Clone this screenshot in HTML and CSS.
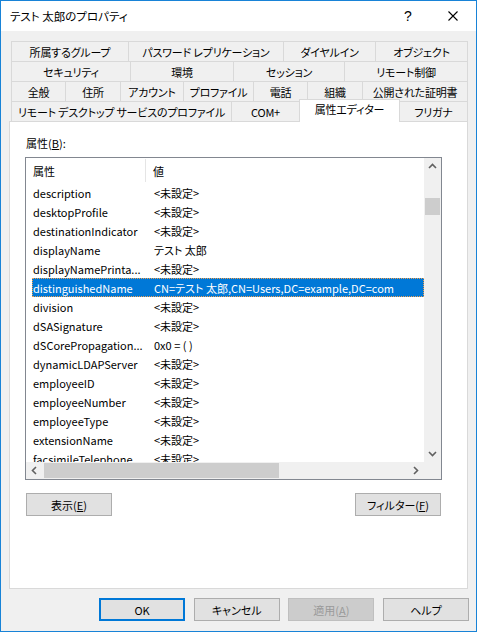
FILE: index.html
```html
<!DOCTYPE html>
<html lang="ja">
<head>
<meta charset="utf-8">
<title>テスト 太郎のプロパティ</title>
<link rel="stylesheet" href="styles.css">
</head>
<body>
<div class="window">
  <div class="titlebar">
    <span class="title">テスト 太郎のプロパティ</span>
    <span class="help">?</span>
    <svg class="close" width="10" height="10" viewBox="0 0 10 10"><path d="M0.5 0.5 L9.5 9.5 M9.5 0.5 L0.5 9.5" stroke="#000" stroke-width="1.1" fill="none"/></svg>
  </div>
  <div class="content">
    <div class="tabs">
      <div class="tabrow r1">
        <div class="tab">所属するグループ</div>
        <div class="tab">パスワード レプリケーション</div>
        <div class="tab">ダイヤルイン</div>
        <div class="tab">オブジェクト</div>
      </div>
      <div class="tabrow r2">
        <div class="tab">セキュリティ</div>
        <div class="tab">環境</div>
        <div class="tab">セッション</div>
        <div class="tab">リモート制御</div>
      </div>
      <div class="tabrow r3">
        <div class="tab">全般</div>
        <div class="tab">住所</div>
        <div class="tab">アカウント</div>
        <div class="tab">プロファイル</div>
        <div class="tab">電話</div>
        <div class="tab">組織</div>
        <div class="tab">公開された証明書</div>
      </div>
      <div class="tabrow r4">
        <div class="tab">リモート デスクトップ サービスのプロファイル</div>
        <div class="tab">COM+</div>
        <div class="tab sel">属性エディター</div>
        <div class="tab">フリガナ</div>
      </div>
    </div>
    <div class="panel">
      <div class="label">属性(<u>B</u>):</div>
      <div class="listbox">
        <div class="listview">
          <div class="lhead">
            <div class="h1">属性</div>
            <div class="h2">値</div>
          </div>
          <div class="row"><div class="c1">description</div><div class="c2">&lt;未設定&gt;</div></div>
          <div class="row"><div class="c1">desktopProfile</div><div class="c2">&lt;未設定&gt;</div></div>
          <div class="row"><div class="c1">destinationIndicator</div><div class="c2">&lt;未設定&gt;</div></div>
          <div class="row"><div class="c1">displayName</div><div class="c2">テスト 太郎</div></div>
          <div class="row"><div class="c1">displayNamePrinta...</div><div class="c2">&lt;未設定&gt;</div></div>
          <div class="row selected"><div class="c1">distinguishedName</div><div class="c2">CN=テスト 太郎,CN=Users,DC=example,DC=com</div></div>
          <div class="row"><div class="c1">division</div><div class="c2">&lt;未設定&gt;</div></div>
          <div class="row"><div class="c1">dSASignature</div><div class="c2">&lt;未設定&gt;</div></div>
          <div class="row"><div class="c1">dSCorePropagation...</div><div class="c2">0x0 = ( )</div></div>
          <div class="row"><div class="c1">dynamicLDAPServer</div><div class="c2">&lt;未設定&gt;</div></div>
          <div class="row"><div class="c1">employeeID</div><div class="c2">&lt;未設定&gt;</div></div>
          <div class="row"><div class="c1">employeeNumber</div><div class="c2">&lt;未設定&gt;</div></div>
          <div class="row"><div class="c1">employeeType</div><div class="c2">&lt;未設定&gt;</div></div>
          <div class="row"><div class="c1">extensionName</div><div class="c2">&lt;未設定&gt;</div></div>
          <div class="row"><div class="c1">facsimileTelephone</div><div class="c2">&lt;未設定&gt;</div></div>
        </div>
        <div class="vscroll">
          <div class="arrow"><svg width="9" height="9" viewBox="0 0 9 9"><path d="M1 6 L4.5 2.5 L8 6" stroke="#606060" stroke-width="1.6" fill="none"/></svg></div>
          <div class="vtrack"><div class="vthumb"></div></div>
          <div class="arrow"><svg width="9" height="9" viewBox="0 0 9 9"><path d="M1 3 L4.5 6.5 L8 3" stroke="#606060" stroke-width="1.6" fill="none"/></svg></div>
        </div>
        <div class="hscroll">
          <div class="arrow"><svg width="9" height="9" viewBox="0 0 9 9"><path d="M6 1 L2.5 4.5 L6 8" stroke="#606060" stroke-width="1.6" fill="none"/></svg></div>
          <div class="htrack"><div class="hthumb"></div></div>
          <div class="arrow"><svg width="9" height="9" viewBox="0 0 9 9"><path d="M3 1 L6.5 4.5 L3 8" stroke="#606060" stroke-width="1.6" fill="none"/></svg></div>
        </div>
        <div class="corner"></div>
      </div>
      <div class="pbtns">
        <button class="btn">表示(<u>E</u>)</button>
        <button class="btn">フィルター(<u>F</u>)</button>
      </div>
    </div>
    <div class="footer">
      <button class="btn default">OK</button>
      <button class="btn">キャンセル</button>
      <button class="btn disabled">適用(<u>A</u>)</button>
      <button class="btn">ヘルプ</button>
    </div>
  </div>
</div>
</body>
</html>
```
FILE: styles.css
```css
* { box-sizing: border-box; }
html, body { margin: 0; padding: 0; }
body {
  font-family: "Noto Sans CJK JP", sans-serif;
  font-size: 11px;
  font-feature-settings: "palt" 1;
  color: #000;
  background: #fff;
}
.window {
  width: 477px;
  height: 632px;
  border: 1px solid #1883d7;
  display: flex;
  flex-direction: column;
  background: #f0f0f0;
}
.titlebar {
  height: 30px;
  flex: none;
  background: #fff;
  display: flex;
  align-items: center;
  padding-left: 9px;
}
.title { flex: 1; line-height: 16px; font-size: 11.5px; }
.help {
  width: 16px;
  text-align: center;
  font-family: "Liberation Sans", sans-serif;
  font-size: 14px;
  line-height: 16px;
  margin-right: 32px;
}
.close { display: block; margin-right: 18px; }

.content {
  flex: 1;
  display: flex;
  flex-direction: column;
  padding: 10px 8px 0 8px;
}
.tabs { margin-left: 2px; }
.tabrow { display: grid; height: 20px; }
.r1 { grid-template-columns: 117px 155px 92px 93px; }
.r2 { grid-template-columns: 119px 103px 111px 124px; }
.r3 { grid-template-columns: 54px 55px 63px 70px 54px 55px 106px; }
.r4 { grid-template-columns: 220px 68px 101px 68px; }
.tab {
  height: 20px;
  border-top: 1px solid #d9d9d9;
  border-left: 1px solid #d9d9d9;
  display: flex;
  align-items: center;
  justify-content: center;
  white-space: nowrap;
  overflow: hidden;
  line-height: 16px;
  letter-spacing: -0.2px;
}
.tab:last-child { border-right: 1px solid #d9d9d9; }
.tab.sel {
  position: relative;
  z-index: 1;
  height: 23px;
  margin-top: -2px;
  padding-bottom: 4px;
  background: #fff;
  border-right: 1px solid #d9d9d9;
}
.sel + .tab { border-left: none; }

.panel {
  height: 468px;
  flex: none;
  background: #fff;
  border: 1px solid #d9d9d9;
  padding: 13px 0 0 15px;
}
.label { line-height: 16px; margin-left: 1px; margin-bottom: 6px; }
.listbox {
  width: 417px;
  height: 323px;
  border: 1px solid #828790;
  display: grid;
  grid-template-columns: 398px 17px;
  grid-template-rows: 304px 17px;
}
.listview { background: #fff; overflow: hidden; }
.lhead { height: 25px; display: flex; align-items: center; }
.h1 {
  width: 120px;
  height: 23px;
  padding-left: 7px;
  border-right: 1px solid #e5e5e5;
  display: flex;
  align-items: center;
}
.h2 { padding-left: 7px; }
.row {
  height: 19px;
  margin-left: 6px;
  display: flex;
  align-items: center;
  white-space: nowrap;
  line-height: 16px;
}
.c1 { width: 121px; padding-left: 1px; overflow: hidden; flex: none; }
.c2 { padding-left: 1px; }
.row.selected {
  background: #0078d7;
  color: #fff;
  outline: 1px dotted #f0a050;
  outline-offset: -1px;
}

.vscroll {
  background: #f0f0f0;
  display: flex;
  flex-direction: column;
}
.arrow {
  width: 17px;
  height: 17px;
  flex: none;
  display: flex;
  align-items: center;
  justify-content: center;
}
.vtrack { flex: 1; }
.vthumb { height: 17px; margin: 23px 1px 0 1px; background: #cdcdcd; }
.hscroll { background: #f0f0f0; display: flex; }
.htrack { flex: 1; }
.hthumb { width: 235px; height: 15px; margin: 1px 0 0 1px; background: #cdcdcd; }
.corner { background: #f0f0f0; }

.btn {
  width: 86px;
  height: 23px;
  padding: 0;
  background: #e1e1e1;
  border: 1px solid #adadad;
  font: inherit;
  color: #000;
  line-height: 16px;
}
.btn u { text-underline-offset: 1px; }
.pbtns {
  width: 415px;
  margin: 13px 0 0 1px;
  display: flex;
  justify-content: space-between;
}
.footer {
  margin-top: 9px;
  margin-right: -1px;
  display: flex;
  justify-content: flex-end;
  gap: 8.67px;
}
.btn.default { border: 2px solid #0078d7; }
.btn.disabled { background: #cccccc; border-color: #bfbfbf; color: #9a9a9a; }
```
